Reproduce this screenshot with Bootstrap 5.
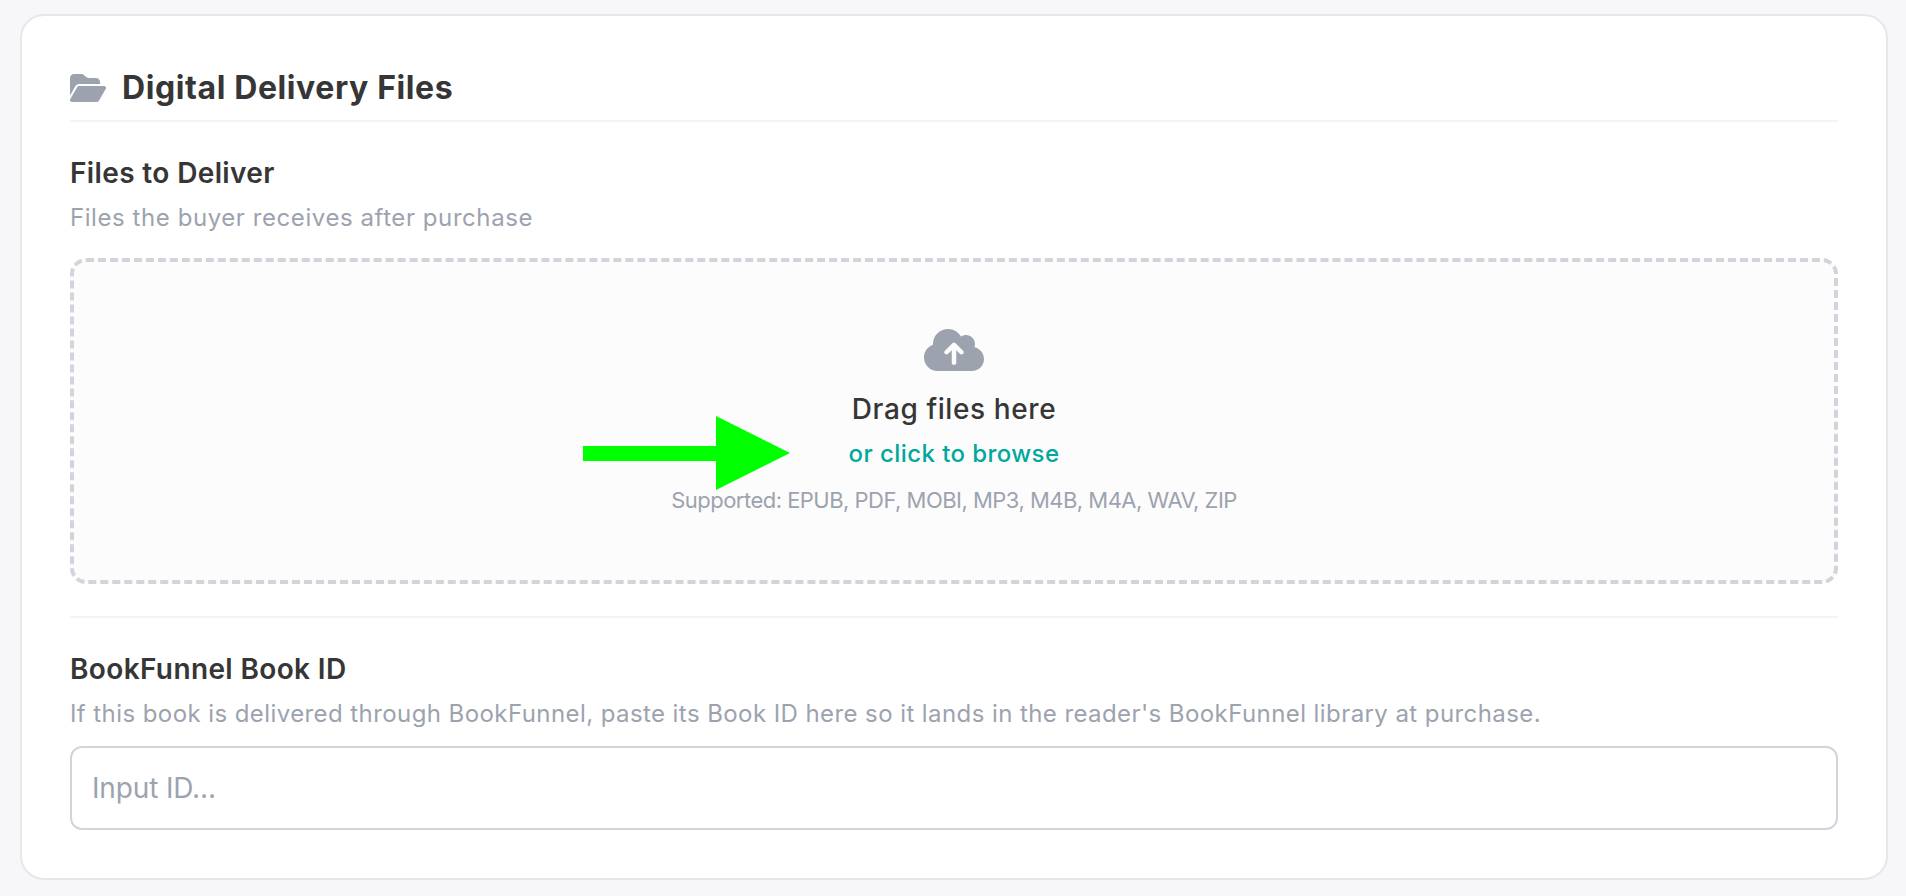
<!DOCTYPE html>
<html lang="en">
<head>
    <meta charset="UTF-8">
    <meta name="viewport" content="width=device-width, initial-scale=1.0">
    <title>Digital Delivery Files</title>
    <link href="https://cdn.jsdelivr.net/npm/bootstrap@5.3.0/dist/css/bootstrap.min.css" rel="stylesheet">
    <style>
        body {
            background-color: #f7f7fa;
            color: #363636;
            font-family: Inter, 'Open Sans', sans-serif;
        }
        .page-wrap {
            padding: 14px 18px 16px 20px;
        }
        .delivery-card {
            border: 2px solid #e5e7eb;
            border-radius: 24px;
            padding: 48px;
        }
        .section-title {
            border-bottom: 2px solid #f3f4f6;
            gap: 16px;
            padding-bottom: 8px;
        }
        .section-title h2 {
            font-size: 32px;
            font-weight: 700;
            letter-spacing: 0.6px;
            line-height: 48px;
        }
        .icon-muted {
            fill: #9ca3af;
        }
        .field-block {
            padding-top: 32px;
        }
        .field-label {
            display: block;
            font-size: 28px;
            font-weight: 600;
            letter-spacing: 0.37px;
            line-height: 38px;
            margin-bottom: 8px;
        }
        .field-help {
            color: #9ca3af;
            font-size: 24px;
            letter-spacing: 0.42px;
            line-height: 36px;
        }
        .files-help {
            letter-spacing: 0.57px;
        }
        .drop-zone {
            background-color: #fcfcfc;
            border: 4px dashed #d1d5db;
            border-radius: 16px;
            height: 326px;
            margin-top: 22px;
            padding-top: 64px;
            cursor: pointer;
        }
        .drop-title {
            font-size: 28px;
            font-weight: 500;
            letter-spacing: 0.6px;
            line-height: 42px;
            margin-top: 14px;
        }
        .drop-browse {
            color: #00a89d;
            font-size: 24px;
            font-weight: 500;
            letter-spacing: 0.43px;
            line-height: 36px;
            margin-top: 6px;
        }
        .drop-types {
            color: #9ca3af;
            font-size: 22px;
            letter-spacing: -0.52px;
            line-height: 34px;
            margin-top: 11px;
        }
        .pointer-arrow {
            left: 509px;
            top: 154px;
        }
        .block-divider {
            border-top: 2px solid #f3f4f6;
            margin-top: 32px;
        }
        .book-input {
            border: 2px solid #d1d5db;
            border-radius: 12px;
            color: #363636;
            font-size: 28px;
            letter-spacing: -0.15px;
            height: 84px;
            margin-top: 14px;
            padding: 0 20px;
        }
        .book-input::placeholder {
            color: #9ca3af;
        }
    </style>
</head>
<body>
    <main class="page-wrap">
        <div class="card delivery-card">
            <div class="section-title d-flex align-items-center">
                <svg class="icon-muted" width="36" height="32" viewBox="0 0 576 512"><path d="M88.7 223.8L0 375.8V96C0 60.7 28.7 32 64 32H181.5c17 0 33.3 6.7 45.3 18.7l26.5 26.5c12 12 28.3 18.7 45.3 18.7H416c35.3 0 64 28.7 64 64v32H144c-22.8 0-43.8 12.1-55.3 31.8zm27.6 16.1C122.1 230 132.6 224 144 224H544c11.5 0 22 6.1 27.7 16.1s5.7 22.2-.1 32.1l-112 192C453.9 474 443.4 480 432 480H32c-11.5 0-22-6.1-27.7-16.1s-5.7-22.2 .1-32.1l112-192z"/></svg>
                <h2 class="mb-0">Digital Delivery Files</h2>
            </div>

            <div class="field-block">
                <label class="field-label" for="deliveryFiles">Files to Deliver</label>
                <p class="field-help files-help mb-0">Files the buyer receives after purchase</p>
                <div class="drop-zone position-relative d-flex flex-column align-items-center" id="dropZone">
                    <svg class="icon-muted" width="60" height="48" viewBox="0 0 640 512"><path d="M144 480C64.5 480 0 415.5 0 336c0-62.8 40.2-116.2 96.2-135.9c-.1-2.7-.2-5.4-.2-8.1c0-88.4 71.6-160 160-160c59.3 0 111 32.2 138.7 80.2C409.9 102 428.3 96 448 96c53 0 96 43 96 96c0 12.2-2.3 23.8-6.4 34.6C596 238.4 640 290.1 640 352c0 70.7-57.3 128-128 128H144zm79-217c-9.4 9.4-9.4 24.6 0 33.9s24.6 9.4 33.9 0l39-39V392c0 13.3 10.7 24 24 24s24-10.7 24-24V257.9l39 39c9.4 9.4 24.6 9.4 33.9 0s9.4-24.6 0-33.9l-80-80c-9.4-9.4-24.6-9.4-33.9 0l-80 80z"/></svg>
                    <div class="drop-title">Drag files here</div>
                    <div class="drop-browse">or click to browse</div>
                    <div class="drop-types">Supported: EPUB, PDF, MOBI, MP3, M4B, M4A, WAV, ZIP</div>
                    <!-- Arrow pointing at the browse link -->
                    <svg class="pointer-arrow position-absolute" width="207" height="74" viewBox="0 0 207 74"><path fill="#00ff00" d="M0 30H133V0L207 37L133 74V45H0z"/></svg>
                    <input type="file" class="d-none" id="deliveryFiles" multiple>
                </div>
            </div>

            <div class="block-divider"></div>

            <div class="field-block">
                <label class="field-label" for="bookId">BookFunnel Book ID</label>
                <p class="field-help mb-0">If this book is delivered through BookFunnel, paste its Book ID here so it lands in the reader's BookFunnel library at purchase.</p>
                <input type="text" class="form-control book-input" id="bookId" placeholder="Input ID...">
            </div>
        </div>
    </main>

    <script>
        const dropZone = document.getElementById('dropZone');
        const deliveryFiles = document.getElementById('deliveryFiles');

        dropZone.addEventListener('click', function() {
            deliveryFiles.click();
        });

        deliveryFiles.addEventListener('click', function(e) {
            e.stopPropagation();
        });
    </script>

    <script src="https://cdn.jsdelivr.net/npm/bootstrap@5.3.0/dist/js/bootstrap.bundle.min.js"></script>
</body>
</html>
